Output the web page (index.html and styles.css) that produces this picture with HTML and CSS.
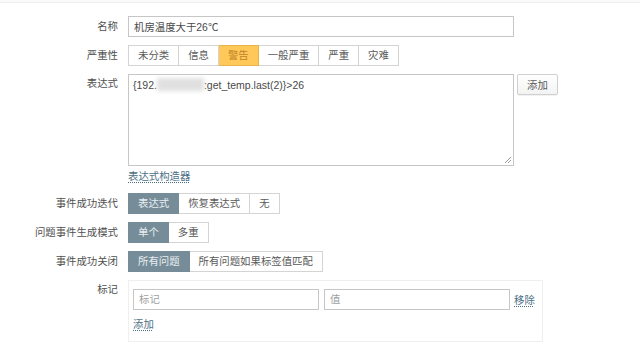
FILE: index.html
```html
<!DOCTYPE html>
<html lang="zh">
<head>
    <meta charset="UTF-8">
    <title>触发器</title>
    <link rel="stylesheet" href="styles.css">
</head>
<body>
    <div class="topline"></div>
    <form class="form-grid">
        <label class="label">名称</label>
        <div class="field">
            <input class="text-input wide" type="text" value="机房温度大于26℃">
        </div>

        <label class="label">严重性</label>
        <div class="field">
            <div class="radio-group">
                <span class="radio">未分类</span>
                <span class="radio">信息</span>
                <span class="radio warning">警告</span>
                <span class="radio">一般严重</span>
                <span class="radio">严重</span>
                <span class="radio">灾难</span>
            </div>
        </div>

        <label class="label label-top">表达式</label>
        <div class="field">
            <div class="expr-row">
                <div class="textarea">{192.<span class="blurred"></span>:get_temp.last(2)}&gt;26<svg class="grip" width="8" height="8" viewBox="0 0 8 8"><path d="M7 1 L1 7 M7 4 L4 7" stroke="#999" stroke-width="1" fill="none"/></svg></div>
                <button type="button" class="btn">添加</button>
            </div>
            <a class="link builder">表达式构造器</a>
        </div>

        <label class="label">事件成功迭代</label>
        <div class="field">
            <div class="radio-group">
                <span class="radio selected">表达式</span>
                <span class="radio">恢复表达式</span>
                <span class="radio">无</span>
            </div>
        </div>

        <label class="label">问题事件生成模式</label>
        <div class="field">
            <div class="radio-group">
                <span class="radio selected">单个</span>
                <span class="radio">多重</span>
            </div>
        </div>

        <label class="label">事件成功关闭</label>
        <div class="field">
            <div class="radio-group">
                <span class="radio selected">所有问题</span>
                <span class="radio">所有问题如果标签值匹配</span>
            </div>
        </div>

        <label class="label label-tags">标记</label>
        <div class="field">
            <div class="tags-box">
                <div class="tag-row">
                    <input class="text-input tag-name" type="text" placeholder="标记">
                    <input class="text-input tag-value" type="text" placeholder="值">
                    <a class="link">移除</a>
                </div>
                <a class="link add-tag">添加</a>
            </div>
        </div>
    </form>
</body>
</html>
```

FILE: styles.css
```css
body {
    margin: 0;
    background-color: #fff;
    font-family: "Liberation Sans", "Noto Sans CJK SC", sans-serif;
    font-size: 10.4px;
    color: #4a4a4a;
}

.topline {
    height: 2px;
    border-bottom: 1px solid #efefef;
    background-color: #fafafa;
}

.form-grid {
    display: grid;
    grid-template-columns: 118px auto;
    column-gap: 10px;
    row-gap: 8px;
    padding-top: 13px;
}

.label {
    text-align: right;
    height: 21px;
    line-height: 21px;
    color: #505050;
    white-space: nowrap;
}

.label-top {
    line-height: 20px;
}

.label-tags {
    height: auto;
    line-height: 20px;
}

.field {
    display: flex;
    flex-direction: column;
    align-items: flex-start;
}

.text-input {
    box-sizing: border-box;
    height: 21px;
    border: 1px solid #c6c6c6;
    padding: 0 5px;
    font: inherit;
    color: #4a4a4a;
    outline: none;
}

.text-input::placeholder {
    color: #a0a0a0;
}

.wide {
    width: 386px;
}

.radio-group {
    display: flex;
}

.radio {
    box-sizing: border-box;
    height: 21px;
    line-height: 19px;
    padding: 0 9px;
    border: 1px solid #d4d4d4;
    border-left: none;
    color: #5a5a5a;
    background-color: #fff;
    white-space: nowrap;
}

.radio:first-child {
    border-left: 1px solid #d4d4d4;
}

.radio.selected {
    background-color: #768d99;
    border-color: #768d99;
    color: #e8eef1;
}

.radio.warning {
    background-color: #ffc859;
    border-color: #e8b24c;
    color: #c08428;
}

.expr-row {
    display: flex;
    align-items: flex-start;
    gap: 3px;
}

.textarea {
    position: relative;
    box-sizing: border-box;
    width: 386px;
    height: 92px;
    border: 1px solid #c6c6c6;
    padding: 3px 4px;
    font-size: 10.5px;
    line-height: 14px;
    color: #4a4a4a;
}

.blurred {
    display: inline-block;
    width: 47px;
    height: 13px;
    vertical-align: -2px;
    background-color: #e0e0e0;
    filter: blur(2px);
}

.grip {
    position: absolute;
    right: 1px;
    bottom: 1px;
}

.btn {
    box-sizing: border-box;
    height: 21px;
    width: 41px;
    padding: 0;
    border: 1px solid #d0d0d0;
    border-radius: 2px;
    background: linear-gradient(#fff, #f3f3f3);
    box-shadow: 0 1px 1px rgba(0, 0, 0, 0.06);
    font: inherit;
    color: #5a5a5a;
}

.link {
    color: #4d6f86;
    text-decoration: underline dotted;
    text-underline-offset: 2px;
    white-space: nowrap;
}

.builder {
    display: block;
    height: 15px;
    line-height: 14px;
    margin-top: 4px;
}

.tags-box {
    box-sizing: border-box;
    width: 415px;
    border: 1px solid #efefef;
    padding: 8px 4px 9px 4px;
}

.tag-row {
    display: flex;
    align-items: center;
    gap: 4px;
}

.tag-name {
    width: 186px;
}

.tag-value {
    width: 186px;
    margin-left: 1px;
}

.add-tag {
    display: inline-block;
    height: 14px;
    line-height: 14px;
    margin-top: 8px;
}
```
